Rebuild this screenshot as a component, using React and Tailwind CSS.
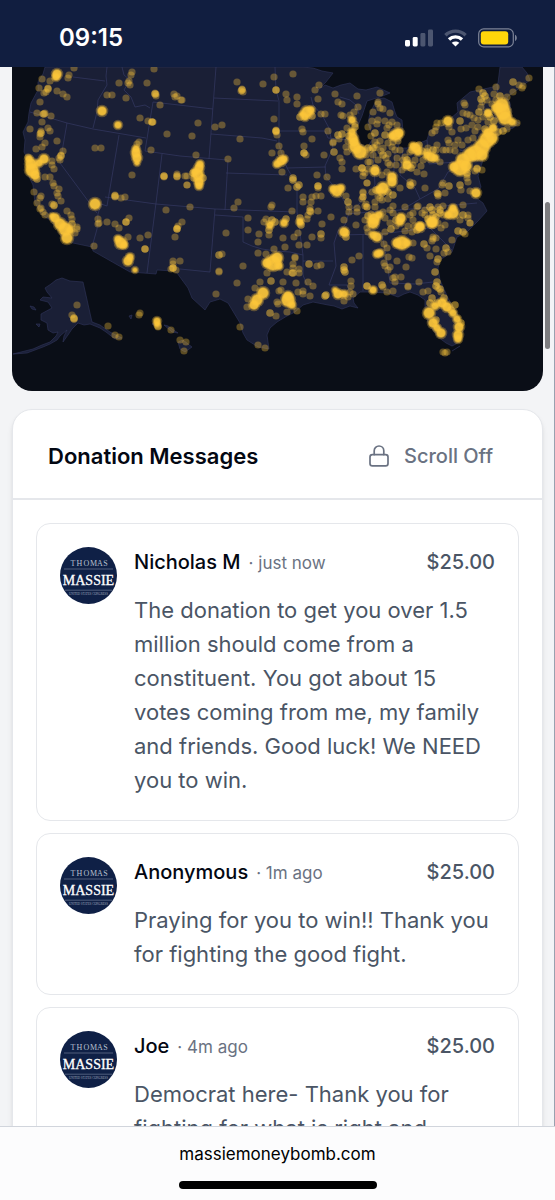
import React, { memo } from "react";

const messages = [
  {
    name: "Nicholas M",
    time: "just now",
    amount: "$25.00",
    text: "The donation to get you over 1.5 million should come from a constituent. You got about 15 votes coming from me, my family and friends. Good luck! We NEED you to win."
  },
  {
    name: "Anonymous",
    time: "1m ago",
    amount: "$25.00",
    text: "Praying for you to win!! Thank you for fighting the good fight."
  },
  {
    name: "Joe",
    time: "4m ago",
    amount: "$25.00",
    text: "Democrat here- Thank you for fighting for what is right and"
  }
];

const toPoints = (str) => str.trim().split(/\s+/).map((p) => p.split(",").map(Number));

const landPaths = [
  // mainland
  "M45 67L43 74 38 82 38 90 31 103 29 113 28 122 23 132 25 140 24 152 28 160 28 175 33 185 35 203 42 215 50 220 58 230 63 240 73 243 92 247 93 251 130 272 156 274 157 270 173 271 177 273 188 288 192 298 205 310 210 302 220 299 228 303 234 313 240 323 243 333 247 340 258 347 269 349 267 335 270 328 277 322 287 316 295 312 303 305 313 302 328 305 334 306 342 309 350 306 358 308 354 303 353 298 360 292 370 292 387 293 398 297 404 294 410 292 418 295 425 300 425 310 428 323 438 337 446 343 452 346 460 342 463 330 457 313 448 298 440 280 438 268 440 260 452 252 457 237 467 232 478 221 487 211 483 203 475 197 481 187 478 176 483 160 493 143 500 133 513 128 520 123 512 120 510 103 507 97 517 90 530 80 527 73 522 67 500 67 498 83 493 87 470 92 457 103 458 112 443 125 430 130 427 140 407 148 398 148 403 132 402 120 397 117 395 112 392 102 384 98 377 99 370 113 368 123 373 138 367 148 358 142 356 130 362 116 367 101 380 97 390 93 377 87 366 90 358 89 350 83 341 85 333 88 325 85 318 90 326 82 333 73 322 71 313 68 302 67Z",
  // alaska
  "M62 278L70 281 83 282 92 322 100 325 110 332 122 338 115 339 106 332 100 328 90 324 84 325 78 323 72 329 68 335 63 342 64 336 67 330 60 336 57 340 50 344 43 347 27 353 13 354 33 349 42 345 50 342 56 336 58 332 53 333 48 330 47 323 41 320 41 314 52 308 48 302 40 300 43 297 52 298 47 292 45 288 51 284 56 280Z",
  "M30 306L34 307 36 310 32 309ZM36 324L40 324 39 327Z",
  // hawaii
  "M129 316L132 315 131 319ZM152 324L157 322 158 327ZM164 325L168 326 175 331 178 333 172 332ZM178 342L183 340 192 347 185 352 180 349Z"
];

const stateLines =
  "M73 77L105 81M107 67L106 76 107 85 98 100 97 112 93 128M30 112L67 123 93 129 146 138M67 123L60 163 97 213M119 135L107 206 101 204 98 214 97 229 92 247M122 67L124 75 130 80 124 90 131 97 135 107 145 105 150 108M153 102L213 109M153 102L145 151M162 154L156 203 147 273M105 197L156 204 215 209M145 151L180 156 227 160M216 67L209 159M214 98L278 101M211 134L262 138 277 141M226 173L287 175M228 160L225 210M215 209L295 212M215 215L243 217 243 242 252 246 262 249 276 251 290 252 303 255M215 209L210 272 180 269M275 67L276 90 279 101 279 131 325 131M279 131L279 145 287 168 326 167M287 168L290 173 297 185 297 212 303 255 303 275 307 285M311 97L313 105 322 115 329 128 333 148 325 166 326 177 337 190 350 210M350 210L345 225 338 231 334 243 335 255 336 266 329 285M303 261L333 261M363 235L363 291M382 235L386 255 390 283M345 214L400 210 477 203M340 235L382 234 420 229M329 285L347 285 350 293M390 283L415 284 433 282M427 140L429 164 483 160M403 150L400 175 415 188 420 199 438 189 448 172 460 165M373 150L375 185 358 205 350 210M395 152L393 185M325 131L328 138 350 140M460 150L480 155M480 92L485 115 497 118M497 84L499 108M340 97L350 100 356 105 359 114M400 210L410 205 420 199M410 230L430 228 452 250";

const faintDots = toPoints(`
74,68 69,75 68,78 42,79 50,81 39,88 48,88 46,92 44,93 57,91 63,94 67,97 40,102 37,113 43,114 45,113 51,116 42,122 30,129 41,131 40,134 40,137
48,128 50,131 57,141 45,143 42,147 36,149 28,157 63,151 61,155 59,158 60,160 52,161 52,165 54,169 45,177 50,177 53,183 54,186 59,189 57,193
58,196 61,201 34,192 41,196 40,198 37,203 41,208 40,209 52,204 54,206 43,212 45,215 67,211 71,215 72,219 77,227 75,233 132,72 131,75 129,81
128,83 130,85 119,83 147,83 154,69 107,95 112,95 126,98 155,93 156,94 156,96 174,94 175,97 177,96 181,100 160,105 140,118 148,121 152,122
153,122 167,134 95,148 101,148 151,150 139,142 137,144 132,175 164,176 164,177 177,174 177,177 185,176 187,185 115,195 115,197 121,198 125,197 166,210
98,219 99,223 107,222 115,224 126,222 129,218 119,228 177,228 182,222 77,229 94,246 128,237 140,238 148,235 145,249 175,237 177,229 178,226
173,261 173,264 173,268 180,261 176,270 171,269 98,224 77,305 72,315 108,326 115,335 119,337 139,315 140,313 158,327 171,330 180,340 186,342 184,351
182,100 198,123 192,136 196,155 237,82 242,89 243,92 241,91 263,84 274,77 276,90 293,74 286,94 287,100 297,97 297,104 315,90 319,85 318,99 335,94
338,102 342,104 357,96 358,107 321,114 325,114 341,115 343,116 215,127 222,125 240,139 228,159 274,119 276,130 276,132 277,135 276,131 279,146 272,153
281,153 302,129 303,132 312,139 304,146 304,153 306,155 324,155 328,131 333,142 333,143 342,162 342,169 346,147 356,169 362,168 363,172 282,172
288,188 317,175 327,177 318,186 318,188 187,176 187,185 190,207 234,208 238,202 272,205 271,207 248,218 266,219 264,222 292,211 303,197 303,202
312,197 316,196 321,196 311,202 310,208 311,212 308,215 307,219 318,211 322,224 331,217 344,220 349,207 357,208 357,212 363,192 363,197 362,199
367,183 367,207 365,206 226,233 222,254 219,272 219,271 243,266 237,283 216,294 240,327 258,345 265,348 248,230 259,234 258,242 269,235 283,238 285,247
294,237 298,233 299,245 307,245 312,237 321,238 258,253 266,254 274,249 295,257 295,258 293,264 293,268 287,272 292,273 299,269 299,273 317,266 321,265
267,273 260,282 283,282 296,283 308,282 313,286 281,290 279,291 298,292 303,291 303,294 310,296 248,299 247,307 255,288 277,302 278,304 276,316
287,312 297,311 352,260 359,256 351,281 351,286 353,294 350,292 348,297 344,301 384,244 387,248 388,257 397,261 384,263 385,266 390,267 388,270
409,257 412,258 406,267 413,243 427,248 430,256 433,237 436,238 432,241 433,239 436,249 448,252 444,253 437,262 452,240 465,234 470,223 438,288 441,292
419,282 408,286 408,287 423,292 428,291 393,278 395,277 401,277 395,282 383,287 393,291 387,292 367,286 443,352 447,352 445,353 519,85 529,78 523,86
522,88 513,92 507,97 496,87 479,89 494,94 496,100 464,103 465,105 482,102 481,107 463,113 467,114 470,115 474,118 478,120 483,117 517,123 507,129
437,123 441,123 436,127 432,133 435,131 449,127 452,132 461,129 466,128 458,140 448,140 449,143 437,145 446,150 450,150 455,151 475,131 473,138
468,140 477,168 482,170 475,171 467,175 467,178 468,182 443,183 442,185 437,193 438,196 445,193 461,190 470,191 425,188 424,174 417,172 410,182 411,186
413,183 400,188 405,157 403,160 436,150 428,148 393,142 377,124 378,120 390,113 383,109 380,108 378,102 378,104 380,93 373,112 392,122 389,125
387,128 375,142 377,145 375,148 383,148 381,151 392,147 395,150 388,154 373,155 365,173 367,183 382,175 388,163 390,165 363,193 363,197 367,207 366,204
375,207 375,202 380,198 382,200 393,206 405,207 418,206 417,207 413,213 422,213 425,215 438,207 443,206 463,205 468,215 468,218 470,223 460,220
390,223 393,213 410,215 413,220 438,223 443,215 425,210 396,226 408,226 412,232 405,231 385,232 385,218 383,212 390,210 445,225 441,228 414,226
356,225 367,228 368,232 371,214 386,158 378,160 370,162 370,150 366,155 397,158 400,150 410,152 423,160 421,166 440,162 443,150 455,145 462,145
472,125 478,127 488,122 492,104 487,100 398,141 388,143 380,141 371,136 368,127 372,121 385,121 397,125 347,128 339,139 348,141 350,115
354,112 355,124 347,152 340,158 368,162 368,169 346,196 349,212 365,220 363,176 396,165 402,170 413,165 415,160 387,172 372,192 378,196 388,199
`);

const strongDots = toPoints(`
48,89 44,114 41,133 61,156 54,205 155,94 152,122 164,176 177,176 115,196 126,222 177,229 145,249 173,268 74,319 74,318 158,326 276,90 242,90
276,131 304,153 334,152 342,134 338,135 293,178 299,185 293,180 297,187 348,202 318,186 310,211 269,230 321,234 219,255 309,264 271,281 270,313 293,273
344,267 345,272 344,270 325,296 326,295 367,286 300,117 312,116 272,220 391,229 424,244 446,248 438,259 458,231 463,232 435,272 437,282 436,286 382,285
432,298 513,82 483,93 485,96 488,113 460,121 460,185 449,186 493,128 498,132 503,131 490,132 485,129 385,135 375,133 383,155 373,148 393,195 382,193
430,207 432,210 433,215 440,213 463,215 410,185 407,160 411,168 427,152 433,150 375,168 438,194 477,169 467,173 362,168 368,148 31,170 37,179
72,224 193,173 194,178 203,178 357,150 355,127 349,136 301,225 300,218 286,219 275,222 388,192 376,190 428,219 436,217 440,210 368,216 396,220 417,230
444,298 430,303 437,303 451,310 455,305 461,323 436,320 440,289 346,233 346,237 481,99 500,96 495,108 494,121 490,117 479,112 419,145 412,150 422,151
`);

const clusters = toPoints(`
57,74,5 56,77,4 32,170,7 29,159,4 44,159,5 31,164,6 35,175,5 39,163,4 136,153,5 137,158,5 136,149,4 137,163,3 102,111,5 118,125,4 95,204,6
55,218,5 60,224,6 65,229,7 67,238,6 52,216,3 70,230,4 121,243,6 118,239,4 124,245,4 128,261,5 130,257,4 135,270,3 157,321,4 157,324,3
307,112,6 305,117,4 311,110,4 302,114,3 199,168,5 198,175,6 199,182,5 200,164,4 199,186,4 195,172,4 281,161,5 277,164,4 284,159,4
353,138,5 355,147,6 360,152,7 352,132,4 352,120,4 354,142,5 337,191,6 341,188,4 333,189,4 284,223,4 270,225,4 300,222,4
273,263,8 277,258,6 267,263,5 279,266,4 263,293,6 257,300,6 254,305,5 288,300,7 288,296,5 292,305,4 338,294,5 344,294,4 335,290,3 344,232,5
377,237,5 373,235,4 402,243,7 397,243,5 407,243,4 373,223,6 400,222,4 420,227,5 432,223,5 377,254,4 380,253,4 373,290,4
429,313,6 433,323,5 441,333,5 437,328,4 442,303,5 447,307,5 435,306,4 453,313,4 457,319,4 459,327,5 458,335,5 458,339,4
448,121,5 503,112,8 502,105,7 505,118,7 512,122,4 498,108,6 487,140,8 482,147,8 492,138,6 488,133,5 475,153,8 470,155,7 482,155,6 460,168,8 463,160,7 454,167,5 466,166,6
476,193,5 407,165,5 416,148,5 418,152,4 413,146,4 431,157,5 427,155,4 435,158,4 396,135,6 399,133,5 392,136,4 375,171,5 392,177,5 392,182,5
383,188,6 379,190,4 453,213,6 453,208,4 448,215,4 374,219,6 379,215,4 401,218,5 432,222,6 420,226,4 488,113,4 493,128,4
`);

const DonationMap = memo(() => (
  <svg
    viewBox="12 67 531 324"
    className="block w-full h-auto rounded-b-[20px] bg-[#0a0e17]"
    role="img"
    aria-label="Donation map"
  >
    <g fill="#1a1f36" stroke="#31365c" strokeWidth="0.6" strokeLinejoin="round">
      {landPaths.map((d) => <path key={d} d={d} />)}
    </g>
    <path d={stateLines} fill="none" stroke="#353a63" strokeWidth="0.7" />
    <path d="M452 351L460 346" stroke="#31365c" strokeWidth="0.7" />
    <g fill="#fbc53a">
      {faintDots.map(([x, y], i) => <circle key={i} cx={x} cy={y} r="3.6" fillOpacity="0.34" />)}
      {strongDots.map(([x, y], i) => <circle key={i} cx={x} cy={y} r="3.8" fillOpacity="0.5" />)}
      {clusters.map(([x, y, r], i) => (
        <g key={i}>
          <circle cx={x} cy={y} r={r + 1.3} fillOpacity="0.3" />
          <circle cx={x} cy={y} r={r} fillOpacity="0.5" />
          <circle cx={x} cy={y} r={r - 1} fillOpacity="0.8" />
        </g>
      ))}
    </g>
  </svg>
));

const StatusBar = () => (
  <header className="h-[67px] shrink-0 bg-[#111e40] flex items-center justify-between pl-[59px] pr-[38px] pt-2">
    <span className="text-[24px] leading-7 font-semibold text-white">09:15</span>
    <div className="flex items-center gap-[11px]">
      <svg width="28" height="18" viewBox="0 0 28 18" fill="#fff">
        <rect x="0" y="11" width="5" height="6.5" rx="1.4" />
        <rect x="7.7" y="8" width="5" height="9.5" rx="1.4" />
        <rect x="15.4" y="4" width="5" height="13.5" rx="1.4" opacity=".25" />
        <rect x="23" y="0.5" width="5" height="17" rx="1.4" opacity=".25" />
      </svg>
      <svg width="23" height="18" viewBox="0 0 23 18" fill="none" strokeWidth="3.4">
        <path d="M1.4 6.2C7 .8 16 .8 21.6 6.2" stroke="#fff" opacity=".25" />
        <path d="M5 10.4C8.6 7 14.4 7 18 10.4" stroke="#fff" />
        <path d="M11.5 17.6L7.7 13.8C9.9 12 13.1 12 15.3 13.8Z" fill="#fff" />
      </svg>
      <svg width="39" height="20" viewBox="0 0 39 20">
        <rect x="0.7" y="0.9" width="34.6" height="18" rx="5" fill="none" stroke="#fff" strokeOpacity=".45" strokeWidth="1.2" />
        <rect x="2.8" y="3.2" width="27.4" height="13.4" rx="3" fill="#ffd60a" />
        <path d="M37 6.8C39.4 8 39.4 11.8 37 13Z" fill="#fff" opacity=".45" />
      </svg>
    </div>
  </header>
);

const Avatar = memo(() => (
  <svg viewBox="0 0 57 57" className="w-[57px] h-[57px] shrink-0" fontFamily="Liberation Serif, serif" textAnchor="middle">
    <circle cx="28.5" cy="28.5" r="28.5" fill="#0f2046" />
    <text y="19" fontSize="8" fill="#b9c0d0">
      <tspan x="13">T</tspan>
      <tspan x="19.5">H</tspan>
      <tspan x="26.5">O</tspan>
      <tspan x="33.5">M</tspan>
      <tspan x="40">A</tspan>
      <tspan x="45.5">S</tspan>
    </text>
    <path d="M4 22H53M5 43.2H52" stroke="#6d7894" strokeWidth=".7" />
    <text x="28.5" y="37.8" fontSize="14" fill="#fff" stroke="#fff" strokeWidth=".3">MASSIE</text>
    <text x="28.5" y="48" fontSize="3" fill="#a2abbf">UNITED STATES CONGRESS</text>
  </svg>
));

const LockIcon = () => (
  <svg width="20" height="22" viewBox="0 0 20 22" fill="none" stroke="currentColor" strokeWidth="1.7" strokeLinecap="round" strokeLinejoin="round">
    <path d="M5.2 9.6V5.8a4.8 4.8 0 0 1 9.6 0v3.8" />
    <rect x="1" y="9.6" width="18" height="11.2" rx="2.4" />
  </svg>
);

const MessageCard = memo(({ message }) => (
  <li className="flex gap-[17px] p-[23px] bg-white border border-gray-200 rounded-[14px]">
    <Avatar />
    <div className="min-w-0 flex-1">
      <div className="flex items-center justify-between h-[30px]">
        <div className="flex items-baseline gap-2">
          <span className="text-[20px] font-medium text-gray-950">{message.name}</span>
          <span className="text-[17px] text-gray-500">· {message.time}</span>
        </div>
        <span className="text-[20px] font-medium text-gray-600">{message.amount}</span>
      </div>
      <p className="mt-4 text-[22px] leading-[34px] text-gray-600">{message.text}</p>
    </div>
  </li>
));

const App = () => {
  return (
    <div className="h-screen flex flex-col bg-gray-100 font-['Inter',sans-serif]">
      <StatusBar />
      <main className="relative flex-1 min-h-0 overflow-hidden pl-3 pr-[11px] border-r border-gray-400">
        <DonationMap />
        <section className="mt-[18px] bg-white border border-gray-200 rounded-[20px] shadow-md">
          <div className="flex items-center justify-between h-[90px] pl-[35px] pr-[49px] pt-1 border-b-2 border-gray-200">
            <h2 className="text-[22px] font-semibold text-gray-950">Donation Messages</h2>
            <button type="button" className="flex items-center gap-[15px] text-[20px] font-medium text-gray-500">
              <LockIcon />
              Scroll Off
            </button>
          </div>
          <ul className="flex flex-col gap-3 p-[23px]">
            {messages.map((message) => (
              <MessageCard key={message.name} message={message} />
            ))}
          </ul>
        </section>
        <div className="absolute right-1 top-[135px] w-[5px] h-[147px] rounded-full bg-[#7d7d80]" />
      </main>
      <footer className="h-[74px] shrink-0 flex flex-col items-center justify-between bg-[#fcfcfd] border-t border-gray-300 pt-3 pb-[11px]">
        <a href="#" className="text-[17px] leading-[30px] text-black">massiemoneybomb.com</a>
        <div className="w-[198px] h-2 rounded-full bg-black" />
      </footer>
    </div>
  );
};

export default App;
